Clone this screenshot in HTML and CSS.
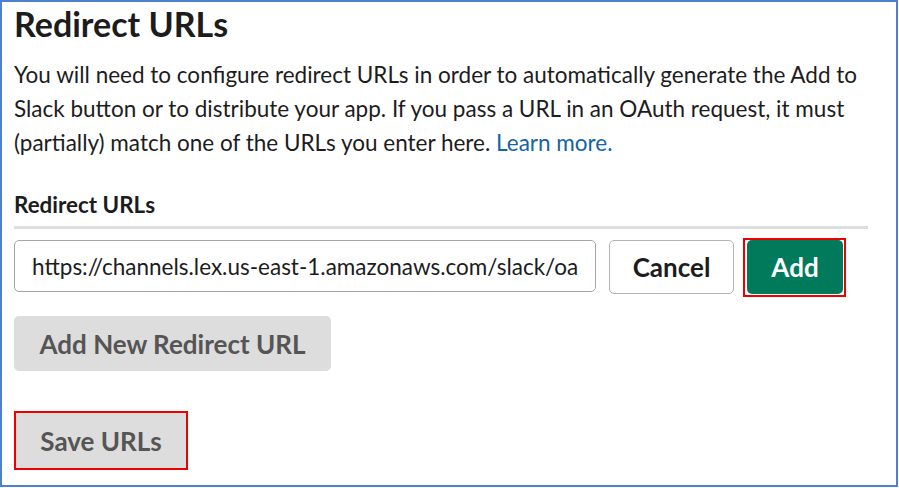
FILE: index.html
```html
<!DOCTYPE html>
<html lang="en">
<head>
<meta charset="utf-8">
<title>Redirect URLs</title>
<link rel="stylesheet" href="styles.css">
</head>
<body>
<div class="frame">
  <h1 class="title">Redirect URLs</h1>
  <p class="desc">You will need to configure redirect URLs in order to automatically generate the Add to Slack button or to distribute your app. If you pass a URL in an OAuth request, it must (partially) match one of the URLs you enter here. <a class="link" href="#">Learn more.</a></p>
  <div class="field-label">Redirect URLs</div>
  <div class="divider"></div>
  <div class="row">
    <input class="url-input" type="text" value="https://channels.lex.us-east-1.amazonaws.com/slack/oauth">
    <button class="btn btn-outline">Cancel</button>
    <span class="highlight"><button class="btn btn-primary">Add</button></span>
  </div>
  <button class="btn btn-muted add-new">Add New Redirect URL</button>
  <div class="save-row">
    <button class="btn btn-muted btn-save">Save URLs</button>
  </div>
</div>
</body>
</html>
```
FILE: styles.css
```css
* { box-sizing: border-box; }
html, body { margin: 0; padding: 0; background: #fff; }
body { font-family: Lato, "Open Sans", sans-serif; color: #1d1c1d; }

.frame {
  width: 898px;
  height: 487px;
  border: 2px solid #4f80d2;
  padding: 3px 28px 0 12px;
  overflow: hidden;
}

.title {
  margin: 0;
  font-size: 34px;
  line-height: 38px;
  font-weight: 700;
}

.desc {
  margin: 15px 0 0;
  font-size: 22.5px;
  line-height: 34px;
}

.link { color: #1264a3; text-decoration: none; }

.field-label {
  margin-top: 33px;
  font-size: 22.4px;
  line-height: 24px;
  font-weight: 700;
}

.divider {
  margin-top: 9px;
  height: 3px;
  background: #dddddd;
}

.row {
  margin-top: 11px;
  display: flex;
  align-items: flex-start;
}

.url-input {
  width: 582px;
  height: 52px;
  border: 1px solid #a5a5a5;
  border-radius: 5px;
  padding: 0 17px;
  font-family: Lato, sans-serif;
  font-size: 22.5px;
  color: #1d1c1d;
  outline: none;
}

.btn {
  height: 54px;
  border-radius: 5px;
  font-family: Lato, sans-serif;
  font-weight: 700;
  font-size: 26px;
  cursor: pointer;
  white-space: nowrap;
}

.btn-outline {
  margin-left: 13px;
  width: 125px;
  border: 1px solid #b3b3b3;
  background: #fff;
  color: #1d1c1d;
}

.highlight {
  margin-left: 9px;
  margin-top: -2px;
  display: flex;
  border: 2px solid #ee0000;
  padding: 0 1px 1px 2px;
}

.btn-primary {
  width: 96px;
  border: none;
  background: #007a5a;
  color: #fff;
}

.btn-muted {
  border: none;
  background: #dddddd;
  color: #555555;
}

.add-new {
  display: block;
  margin-top: 19px;
  width: 317px;
  height: 55px;
}

.save-row { margin-top: 40px; }

.btn-save {
  width: 174px;
  height: 59px;
  border: 2px solid #ee0000;
  border-radius: 0;
}
```
